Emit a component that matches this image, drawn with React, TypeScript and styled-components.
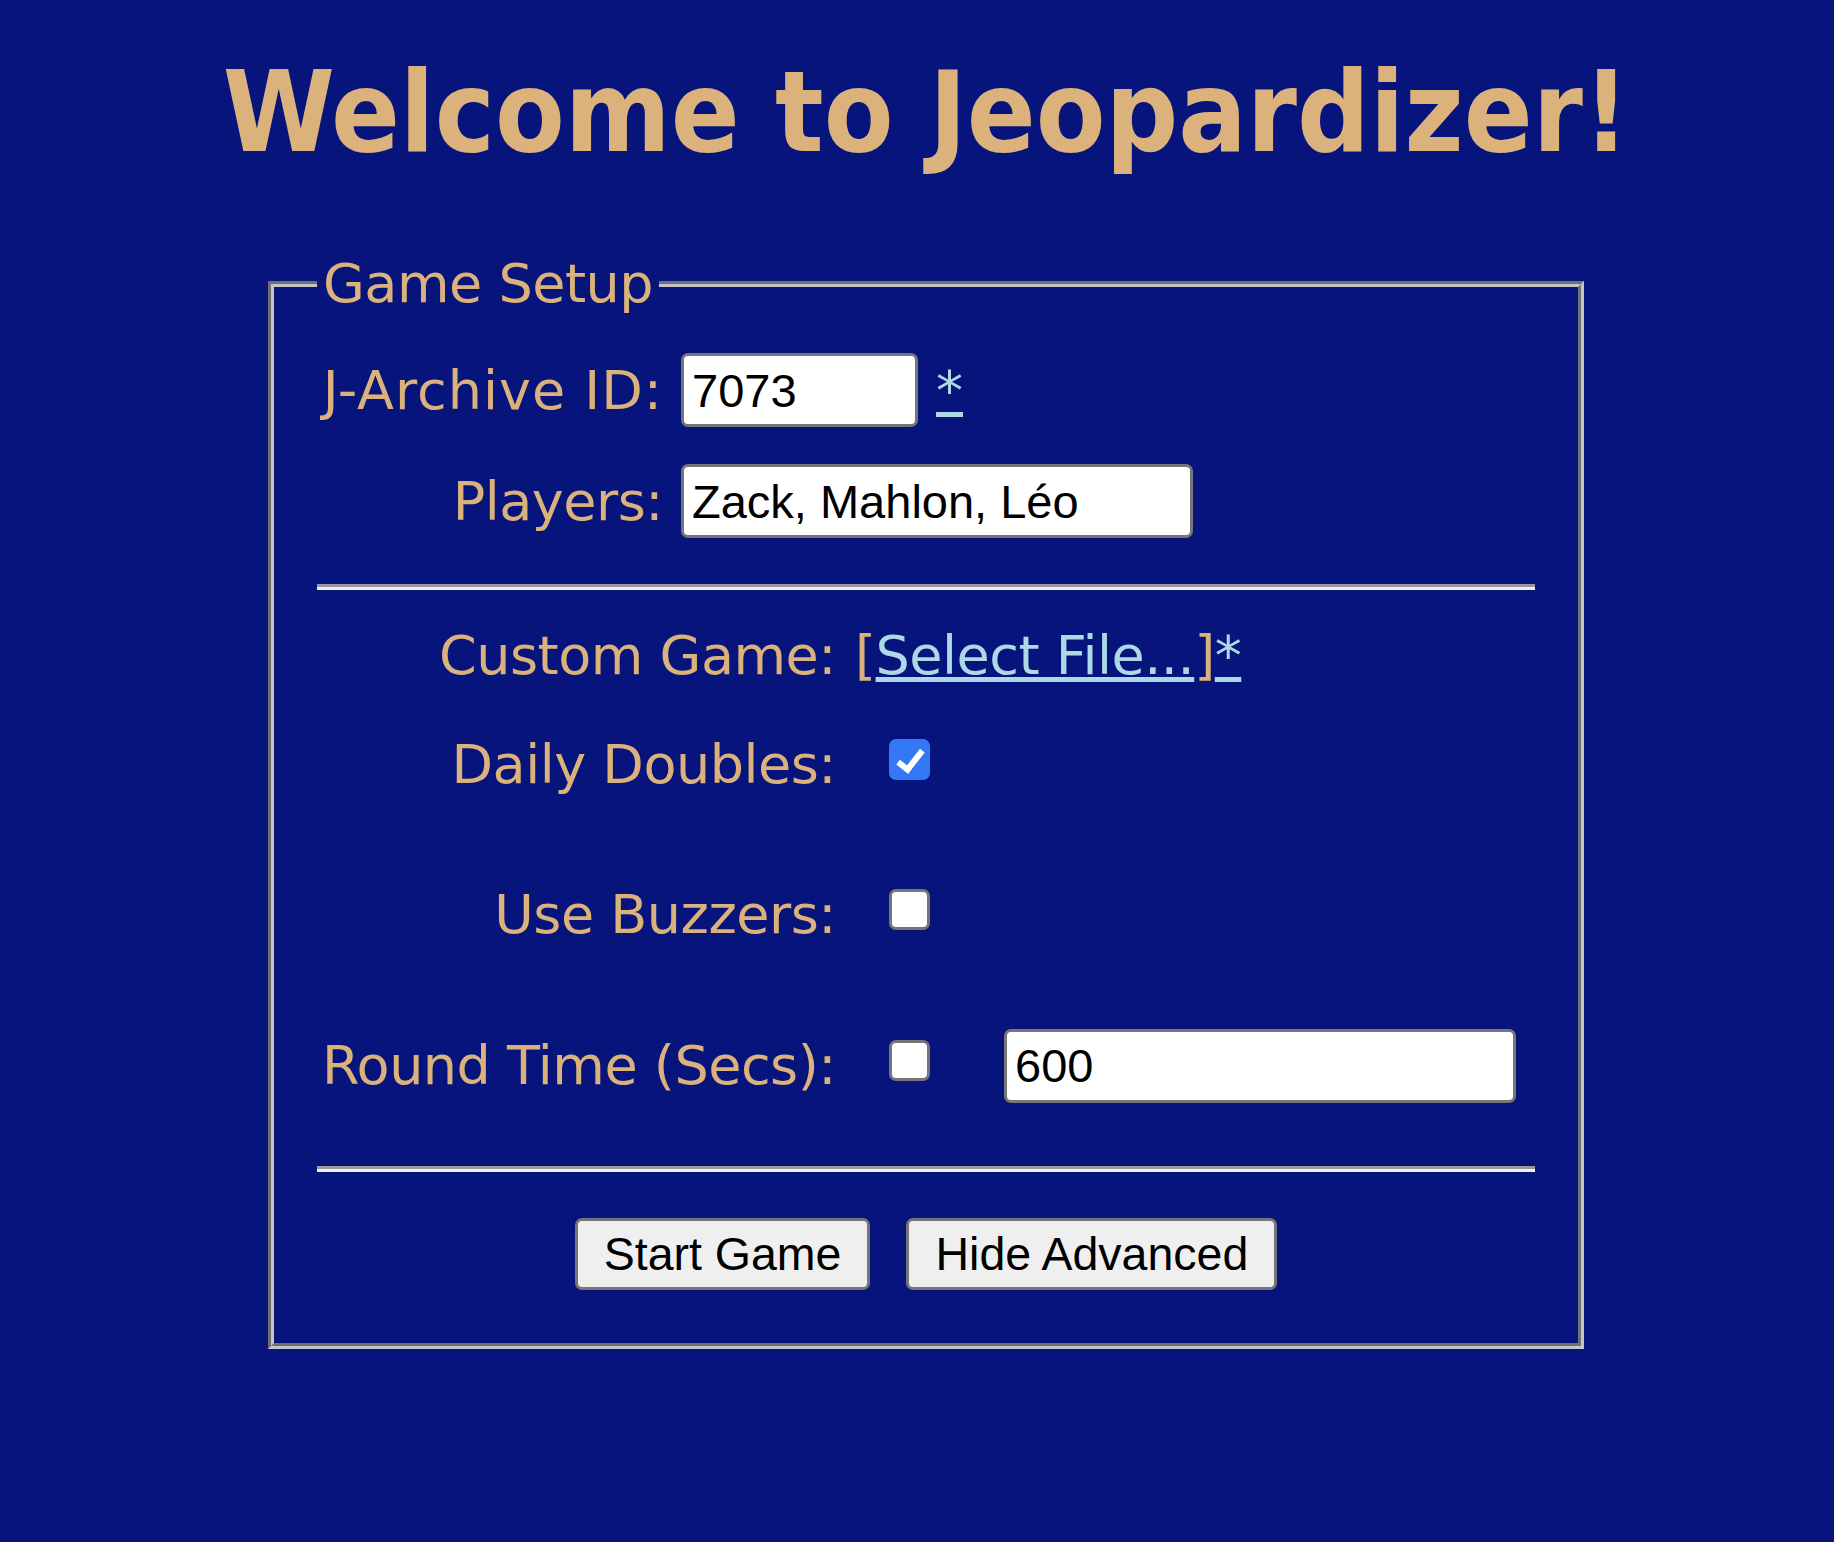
import React from "react";
import styled, { createGlobalStyle } from "styled-components";

const gold = "#dbb27b";
const linkBlue = "#add8e6";

const GlobalStyle = createGlobalStyle`
  html, body {
    margin: 0;
    padding: 0;
    background: #07147b;
  }
  body {
    font-family: "DejaVu Sans", sans-serif;
    min-height: 1542px;
  }
`;

const Page = styled.div`
  display: flex;
  flex-direction: column;
  align-items: center;
  padding: 56px 0 0 18px;
  box-sizing: border-box;
  min-height: 1542px;
`;

const Title = styled.h1`
  margin: 0;
  font-family: "DejaVu Sans Condensed", "DejaVu Sans", sans-serif;
  font-stretch: condensed;
  font-weight: bold;
  font-size: 113px;
  line-height: 1;
  color: ${gold};
  white-space: nowrap;
`;

const Fieldset = styled.fieldset`
  margin: 82px 0 0;
  width: 1316px;
  box-sizing: border-box;
  border: 6px groove #c4c4c4;
  padding: 0 43px 53px;
  min-inline-size: 0;
`;

const Legend = styled.legend`
  padding: 0 6px;
  font-size: 54px;
  letter-spacing: -0.5px;
  line-height: 65px;
  color: ${gold};
  white-space: nowrap;
`;

const TopGrid = styled.div`
  display: grid;
  grid-template-columns: 346px auto;
  grid-auto-rows: 74px;
  column-gap: 18px;
  row-gap: 37px;
  align-items: center;
  margin-top: 37px;
`;

const AdvGrid = styled.div`
  display: grid;
  grid-template-columns: 519px 168px 512px;
  grid-template-rows: 65px 153px 147px 155px;
  align-items: center;
  padding-top: 33px;
`;

const Label = styled.div<{ $wide?: boolean }>`
  font-size: 54px;
  letter-spacing: ${(p) => (p.$wide ? "1px" : "-0.5px")};
  line-height: 65px;
  color: ${gold};
  text-align: right;
  white-space: nowrap;
`;

const Cell = styled.div<{ $span?: boolean }>`
  display: flex;
  align-items: center;
  grid-column: ${(p) => (p.$span ? "2 / span 2" : "auto")};
`;

const TextInput = styled.input<{ $w: number }>`
  box-sizing: border-box;
  width: ${(p) => p.$w}px;
  height: 74px;
  margin: 0;
  padding: 0 8px;
  border: 3px solid #767676;
  border-radius: 7px;
  background: #fff;
  color: #000;
  font-family: "Liberation Sans", Arial, sans-serif;
  font-size: 47px;
  outline: none;
`;

const Star = styled.a`
  margin-left: 18px;
  font-size: 54px;
  line-height: 65px;
  color: ${linkBlue};
  text-decoration: underline;
  align-self: center;
`;

const FileLine = styled.div`
  padding-left: 19px;
  font-size: 54px;
  letter-spacing: -0.5px;
  line-height: 65px;
  color: ${gold};
  white-space: nowrap;
`;

const FileLink = styled.a`
  color: ${linkBlue};
  text-decoration: underline;
`;

const Divider = styled.hr<{ $top: number }>`
  margin: ${(p) => p.$top}px 0 0;
  height: 0;
  border: none;
  border-top: 3px solid #9a9a9a;
  border-bottom: 3px solid #eeeeee;
`;

const Check = styled.input.attrs({ type: "checkbox" })`
  appearance: none;
  -webkit-appearance: none;
  position: relative;
  box-sizing: border-box;
  width: 41px;
  height: 41px;
  margin: 0 0 10px 53px;
  border: 3px solid #767676;
  border-radius: 7px;
  background: #fff;

  &:checked {
    background: #3478f6;
    border-color: #3478f6;
  }

  &:checked::after {
    content: "";
    position: absolute;
    left: 11px;
    top: 3px;
    width: 9px;
    height: 21px;
    border: solid #fff;
    border-width: 0 6px 6px 0;
    transform: rotate(38deg);
  }
`;

const Buttons = styled.div`
  display: flex;
  justify-content: center;
  gap: 36px;
  margin-top: 46px;
`;

const Button = styled.button`
  box-sizing: border-box;
  height: 72px;
  padding: 0 26px;
  margin: 0;
  border: 3px solid #767676;
  border-radius: 7px;
  background: #efefef;
  color: #000;
  font-family: "Liberation Sans", Arial, sans-serif;
  font-size: 46.5px;
`;

export default function App() {
  return (
    <>
      <GlobalStyle />
      <Page>
        <Title>Welcome to Jeopardizer!</Title>
        <Fieldset>
          <Legend>Game Setup</Legend>
          <TopGrid>
            <Label $wide>J-Archive ID:</Label>
            <Cell>
              <TextInput $w={237} defaultValue="7073" />
              <Star href="#">*</Star>
            </Cell>
            <Label>Players:</Label>
            <Cell>
              <TextInput $w={512} defaultValue="Zack, Mahlon, Léo" />
            </Cell>
          </TopGrid>
          <Divider $top={46} />
          <AdvGrid>
            <Label>Custom Game:</Label>
            <Cell $span>
              <FileLine>
                [<FileLink href="#">Select File...</FileLink>]
                <FileLink href="#">*</FileLink>
              </FileLine>
            </Cell>
            <Label>Daily Doubles:</Label>
            <Cell>
              <Check defaultChecked />
            </Cell>
            <div />
            <Label>Use Buzzers:</Label>
            <Cell>
              <Check />
            </Cell>
            <div />
            <Label>Round Time (Secs):</Label>
            <Cell>
              <Check />
            </Cell>
            <Cell>
              <TextInput $w={512} defaultValue="600" />
            </Cell>
          </AdvGrid>
          <Divider $top={23} />
          <Buttons>
            <Button>Start Game</Button>
            <Button>Hide Advanced</Button>
          </Buttons>
        </Fieldset>
      </Page>
    </>
  );
}
